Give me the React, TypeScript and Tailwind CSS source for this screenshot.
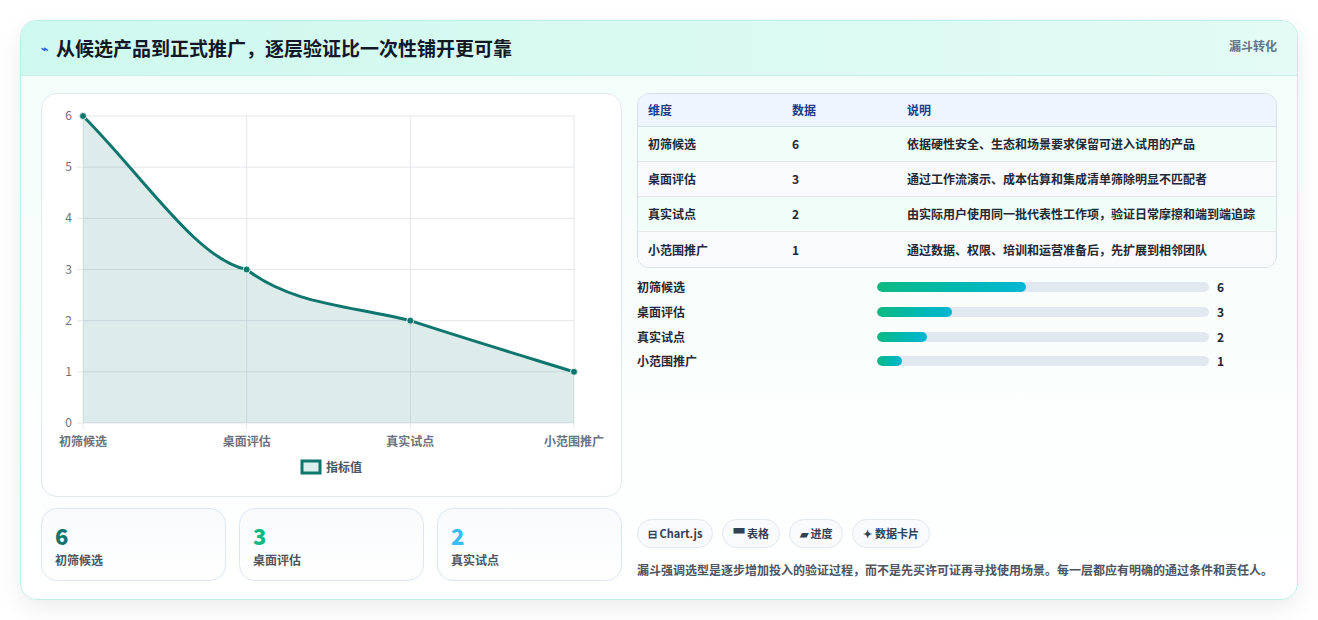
const rows = [
  { name: "初筛候选", value: 6, desc: "依据硬性安全、生态和场景要求保留可进入试用的产品", w: "w-[45%]" },
  { name: "桌面评估", value: 3, desc: "通过工作流演示、成本估算和集成清单筛除明显不匹配者", w: "w-[22.5%]" },
  { name: "真实试点", value: 2, desc: "由实际用户使用同一批代表性工作项，验证日常摩擦和端到端追踪", w: "w-[15%]" },
  { name: "小范围推广", value: 1, desc: "通过数据、权限、培训和运营准备后，先扩展到相邻团队", w: "w-[7.5%]" },
];

function Chart() {
  const L = 41, R = 532, T = 22, B = 329;
  const y = (v: number) => B - (v / 6) * (B - T);
  const xs = [L, L + (R - L) / 3, L + (2 * (R - L)) / 3, R];
  const pts = rows.map((r, i) => [xs[i], y(r.value)]);
  const line = `M${pts[0][0]},${pts[0][1]} C${pts[0][0] + 60},${pts[0][1] + 60} ${pts[1][0] - 50},${pts[1][1] - 10} ${pts[1][0]},${pts[1][1]} C${pts[1][0] + 45},${pts[1][1] + 35} ${pts[2][0] - 60},${pts[2][1] - 15} ${pts[2][0]},${pts[2][1]} C${pts[2][0] + 55},${pts[2][1] + 18} ${pts[3][0] - 55},${pts[3][1] - 17} ${pts[3][0]},${pts[3][1]}`;
  return (
    <svg width="580" height="403" className="block" style={{ fontFamily: "'Noto Sans CJK SC', sans-serif" }}>
      {[0, 1, 2, 3, 4, 5, 6].map((v) => (
        <g key={v}>
          <line x1={L - 6} x2={R} y1={y(v)} y2={y(v)} stroke="#e5e7eb" />
          <text x={L - 11} y={y(v) + 4} fontSize="12" fill="#6b7280" textAnchor="end">{v}</text>
        </g>
      ))}
      {xs.map((x, i) => (
        <g key={i}>
          <line x1={x} x2={x} y1={T} y2={B + 6} stroke="#e5e7eb" />
          <text x={i === 3 ? R : i === 0 ? L : x} y={B + 23} fontSize="12" fill="#6b7280" textAnchor="middle" fontWeight="600">{rows[i].name}</text>
        </g>
      ))}
      <path d={`${line} L${R},${B} L${L},${B} Z`} fill="#0f766e" fillOpacity="0.14" />
      <path d={line} fill="none" stroke="#0f766e" strokeWidth="3" />
      {pts.map(([px, py], i) => (
        <circle key={i} cx={px} cy={py} r="3.5" fill="#0f766e" stroke="#e6f3f1" strokeWidth="1" />
      ))}
      <rect x="260" y="367" width="18" height="12" fill="#dbeeeb" stroke="#0f766e" strokeWidth="3" />
      <text x="284" y="378" fontSize="12" fill="#4b5563" fontWeight="600">指标值</text>
    </svg>
  );
}

export default function App() {
  return (
    <div className="min-h-[620px] bg-white p-5" style={{ fontFamily: "'Noto Sans CJK SC', sans-serif" }}>
      <div className="rounded-2xl border border-[#bfeee6] bg-gradient-to-b from-[#f2fdf9] to-white shadow-[0_8px_24px_rgba(0,0,0,0.08)] overflow-hidden">
        <div className="h-[55px] flex items-center justify-between px-5 bg-gradient-to-r from-[#cff9ee] to-[#e3fbf4] border-b border-[#c9f0e6]">
          <h1 className="text-[19px] font-bold text-[#111827] flex items-center gap-2">
            <span className="text-[12px] text-[#2563eb]">⌁</span>从候选产品到正式推广，逐层验证比一次性铺开更可靠
          </h1>
          <span className="text-[12px] font-bold text-[#64748b] self-start mt-[16px]">漏斗转化</span>
        </div>
        <div className="flex gap-[15px] px-5 pt-[17px] pb-[18px]">
          <div className="w-[581px] flex flex-col gap-[11px]">
            <div className="rounded-2xl border border-[#e2e8f0] bg-white h-[404px]">
              <Chart />
            </div>
            <div className="grid grid-cols-3 gap-[13px]">
              {[["6", "text-[#0f766e]", "初筛候选"], ["3", "text-[#10b981]", "桌面评估"], ["2", "text-[#38bdf8]", "真实试点"]].map(([v, c, n]) => (
                <div key={n} className="h-[73px] rounded-2xl border border-[#dbe7f3] bg-gradient-to-b from-[#f8fafc] to-white px-[13px] pt-[12px]">
                  <div className={`text-[22px] font-extrabold leading-[28px] ${c}`}>{v}</div>
                  <div className="text-[12px] font-semibold text-[#4b5563] mt-[2px]">{n}</div>
                </div>
              ))}
            </div>
          </div>
          <div className="flex-1 flex flex-col">
            <div className="rounded-xl border border-[#d6e0ea] overflow-hidden text-[12px] font-semibold text-[#1f2937]">
              <div className="flex h-[33px] items-center bg-[#eef5ff] text-[#1e3a8a] border-b border-[#d6e0ea]">
                <div className="w-[154px] pl-[10px]">维度</div>
                <div className="w-[115px]">数据</div>
                <div>说明</div>
              </div>
              {rows.map((r, i) => (
                <div key={r.name} className={`flex h-[35px] items-center ${i % 2 === 0 ? "bg-[#f0fdf8]" : "bg-[#f9fafb]"} ${i < 3 ? "border-b border-[#e5e7eb]" : ""}`}>
                  <div className="w-[154px] pl-[10px]">{r.name}</div>
                  <div className="w-[115px]">{r.value}</div>
                  <div className="whitespace-nowrap">{r.desc}</div>
                </div>
              ))}
            </div>
            <div className="mt-[7px] flex flex-col">
              {rows.map((r) => (
                <div key={r.name} className="flex items-center h-[24.7px] text-[12px] font-bold text-[#1f2937]">
                  <div className="w-[240px]">{r.name}</div>
                  <div className="w-[332px] h-[10px] rounded-full bg-[#e2e8f0] overflow-hidden">
                    <div className={`h-full rounded-full bg-gradient-to-r from-[#10b981] to-[#06b6d4] ${r.w}`} />
                  </div>
                  <div className="ml-[8px]">{r.value}</div>
                </div>
              ))}
            </div>
            <div className="mt-auto flex gap-[9px]">
              {["⊟ Chart.js", "▀ 表格", "▰ 进度", "✦ 数据卡片"].map((c) => (
                <span key={c} className="h-[29px] px-[10px] flex items-center rounded-full border border-[#e2e8f0] bg-[#f8fafc] text-[11px] font-bold text-[#334155]">{c}</span>
              ))}
            </div>
            <p className="mt-[11px] text-[12px] font-semibold leading-[22px] text-[#4b5563]">
              漏斗强调选型是逐步增加投入的验证过程，而不是先买许可证再寻找使用场景。每一层都应有明确的通过条件和责任人。
            </p>
          </div>
        </div>
      </div>
    </div>
  );
}
